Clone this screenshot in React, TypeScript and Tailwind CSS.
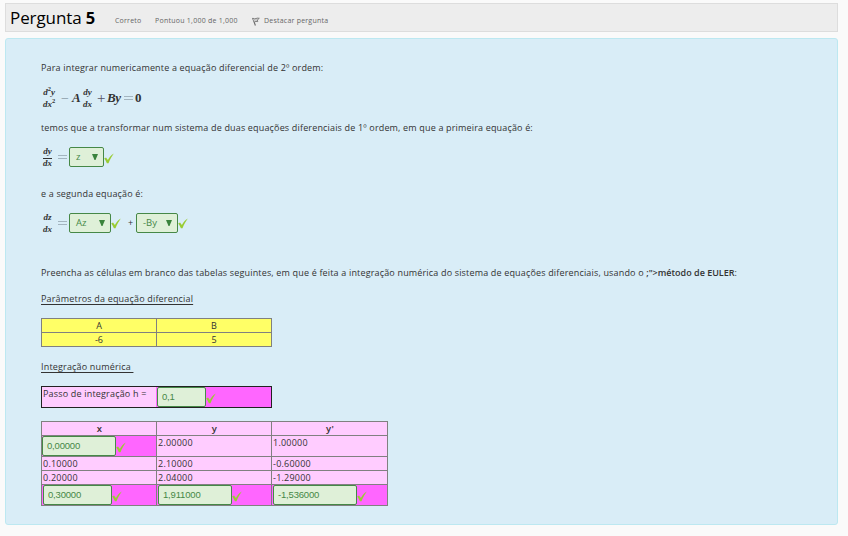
import type { ReactNode } from 'react';

const ARIAL = "font-['Liberation_Sans',Arial,sans-serif]";
const SERIF = "font-['Liberation_Serif','Times_New_Roman',serif]";

function Check({ className = '' }: { className?: string }) {
  return (
    <svg viewBox="0 0 10 11" className={`h-[11px] w-[10px] shrink-0 ${className}`}>
      <path d="M0.2 5.6 L2 4.6 L3.9 7 C5.4 4.2 7.2 2 9.8 0.4 C7.8 3.2 6 6.4 4.5 10.2 L2.9 10.2 C2.2 8.4 1.4 7 0.2 5.6 Z" fill="#9c3" />
    </svg>
  );
}

function Select({ value, className }: { value: string; className: string }) {
  return (
    <div className={`flex h-5 shrink-0 items-center justify-between rounded-[2px] border border-[#468847] bg-[#dff0d8] pr-[5px] pl-[6px] text-[9.5px] text-[#468847] ${className}`}>
      <span>{value}</span>
      <svg viewBox="0 0 6 6" className="h-[6px] w-[6px]">
        <path d="M0 0H6L3.5 6H2.5Z" fill="#3a833c" />
      </svg>
    </div>
  );
}

function Answer({ value, className }: { value: string; className: string }) {
  return (
    <div className="flex h-5 items-center">
      <div className={`flex h-5 items-center rounded-[2px] border border-[#468847] bg-[#dff0d8] pl-[4px] text-[9.5px] tracking-[-0.18px] text-[#468847] ${ARIAL} ${className}`}>
        {value}
      </div>
      <Check className="mt-[3px]" />
    </div>
  );
}

function Frac({ top, bottom, bar = false }: { top: ReactNode; bottom: ReactNode; bar?: boolean }) {
  return (
    <span className="flex w-fit flex-col items-center text-[9px] leading-[9px] font-bold italic">
      <span className="h-[9px]">{top}</span>
      <span className={`mt-[2px] h-px w-full ${bar ? 'bg-[#333]' : ''}`} />
      <span className="h-[9px]">{bottom}</span>
    </span>
  );
}

function Sup() {
  return <span className="inline-block -translate-y-[4px] text-[6.5px] leading-none not-italic">2</span>;
}

function Equals() {
  return (
    <span className="flex w-3 flex-col gap-[2px] pl-[1px]">
      <i className="h-px w-[9px] bg-[#a3b4bf]" />
      <i className="h-px w-[9px] bg-[#a3b4bf]" />
    </span>
  );
}

function Cell({ children, className = '' }: { children: ReactNode; className?: string }) {
  return <div className={`overflow-hidden bg-[#fcf] pl-px leading-[13px] ${className}`}>{children}</div>;
}

export default function App() {
  return (
    <div className="h-[536px] w-[848px] bg-[#fafafa] pt-[3px] pl-[5px] font-['Open_Sans',sans-serif] text-[#333]">
      <header className="flex h-[29px] w-[833px] items-center border border-[#ddd] bg-[#ededed] pl-1 text-[7px] whitespace-nowrap text-[#666]">
        <h3 className="w-[105px] text-[17px] leading-[26px] tracking-[-0.1px] text-black">
          Pergunta <b className="text-[16.5px]">5</b>
        </h3>
        <span className="mt-[7px] w-10 tracking-[0.2px]">Correto</span>
        <span className="mt-[7px] w-[97px] tracking-[0.25px]">Pontuou 1,000 de 1,000</span>
        <svg viewBox="0 0 8 9" className="mt-[7px] mr-1 h-[9px] w-2">
          <path d="M0.6 1L3.4 8.5" fill="none" stroke="#666" strokeWidth="1.1" />
          <path d="M0.8 1.4Q2.5 2.2 4 1.5T7.3 1.3L5.3 3L5.8 4.6Q4 4.1 2.2 5" fill="#ccc" stroke="#777" strokeWidth="0.9" />
        </svg>
        <span className="mt-[7px] tracking-[0.22px]">Destacar pergunta</span>
      </header>

      <main className="mt-[6px] h-[487px] w-[833px] rounded-[3px] border border-[#bce8f1] bg-[#d9edf7] pt-[21px] pl-[35px] text-[9px] whitespace-nowrap">
        <p className="h-4 leading-4 tracking-[0.165px]">Para integrar numericamente a equação diferencial de 2º ordem:</p>

        <div className={`mt-2 flex h-7 items-center text-[13px] ${SERIF}`}>
          <span className="w-[20px] pl-[2px]">
            <Frac top={<>d<Sup />y</>} bottom={<>dx<Sup /></>} />
          </span>
          <span className="w-[11px] text-[14px] text-[#8899a5]">−</span>
          <b className="w-[11px] italic">A</b>
          <span className="w-[14px]"><Frac top="dy" bottom="dx" /></span>
          <span className="w-[10px] text-[15px] text-[#556]">+</span>
          <b className="w-[16px] tracking-[-0.5px] italic">By</b>
          <Equals />
          <b>0</b>
        </div>

        <p className="mt-2 h-4 leading-4 tracking-[0.165px]">
          temos que a transformar num sistema de duas equações diferenciais de 1º ordem, em que a primeira equação é:
        </p>

        <div className="mt-[9px] flex h-6 items-center">
          <span className={`w-[16px] pl-[2px] ${SERIF}`}><Frac top="dy" bottom="dx" bar /></span>
          <Equals />
          <Select value="z" className="w-[35px]" />
          <Check className="mt-[2px]" />
        </div>

        <p className="mt-[17px] h-4 leading-4 tracking-[0.165px]">e a segunda equação é:</p>

        <div className="mt-[9px] flex h-6 items-center">
          <span className={`w-[16px] pl-[2px] ${SERIF}`}><Frac top="dz" bottom="dx" /></span>
          <Equals />
          <Select value="Az" className="w-[42px]" />
          <Check className="mt-px" />
          <span className="w-[15px] pl-[7px]">+</span>
          <Select value="-By" className="w-[42px]" />
          <Check className="mt-px" />
        </div>

        <p className="mt-[30px] h-4 leading-4">
          <span className="tracking-[0.165px]">Preencha as células em branco das tabelas seguintes, em que é feita a integração numérica do sistema de equações diferenciais, usando o </span>
          <span className="font-semibold">;"&gt;método de EULER</span>:
        </p>
        <p className="mt-[10px] h-4 leading-4 tracking-[0.175px] underline underline-offset-2">Parâmetros da equação diferencial</p>

        <div className="mt-[11px] grid w-[231px] grid-cols-[114px_114px] grid-rows-[13px_13px] gap-px bg-[#808080] p-px text-center text-[9px] leading-[14px] *:bg-[#ff6]">
          <div>A</div>
          <div>B</div>
          <div>-6</div>
          <div>5</div>
        </div>

        <p className="mt-3 h-4 leading-4 tracking-[0.175px] whitespace-pre underline underline-offset-2">Integração numérica </p>

        <div className="mt-[11px] flex h-[22px] w-[231px] border border-[#222] bg-[#f6f]">
          <div className="w-[114px] bg-[#fcf] pl-px leading-[14px] tracking-[0.18px]">Passo de integração h =</div>
          <div className="pl-px"><Answer value="0,1" className="w-[49px]" /></div>
        </div>

        <div className="mt-[13px] grid w-[347px] grid-cols-[114px_114px_115px] grid-rows-[13px_20px_13px_13px_20px] gap-px bg-[#808080] p-px tracking-[0.23px]">
          <Cell className="text-center text-[9.5px] font-semibold">x</Cell>
          <Cell className="text-center text-[9.5px] font-semibold">y</Cell>
          <Cell className="text-center text-[9.5px] font-semibold">y'</Cell>
          <div className="bg-[#f6f]"><Answer value="0,00000" className="w-[74px]" /></div>
          <Cell>2.00000</Cell>
          <Cell>1.00000</Cell>
          <Cell>0.10000</Cell>
          <Cell>2.10000</Cell>
          <Cell>-0.60000</Cell>
          <Cell>0.20000</Cell>
          <Cell>2.04000</Cell>
          <Cell>-1.29000</Cell>
          <div className="bg-[#f6f] pl-px"><Answer value="0,30000" className="w-[69px]" /></div>
          <div className="bg-[#f6f] pl-px"><Answer value="1,911000" className="w-[74px]" /></div>
          <div className="bg-[#f6f] pl-px"><Answer value="-1,536000" className="w-[84px]" /></div>
        </div>
      </main>
    </div>
  );
}
